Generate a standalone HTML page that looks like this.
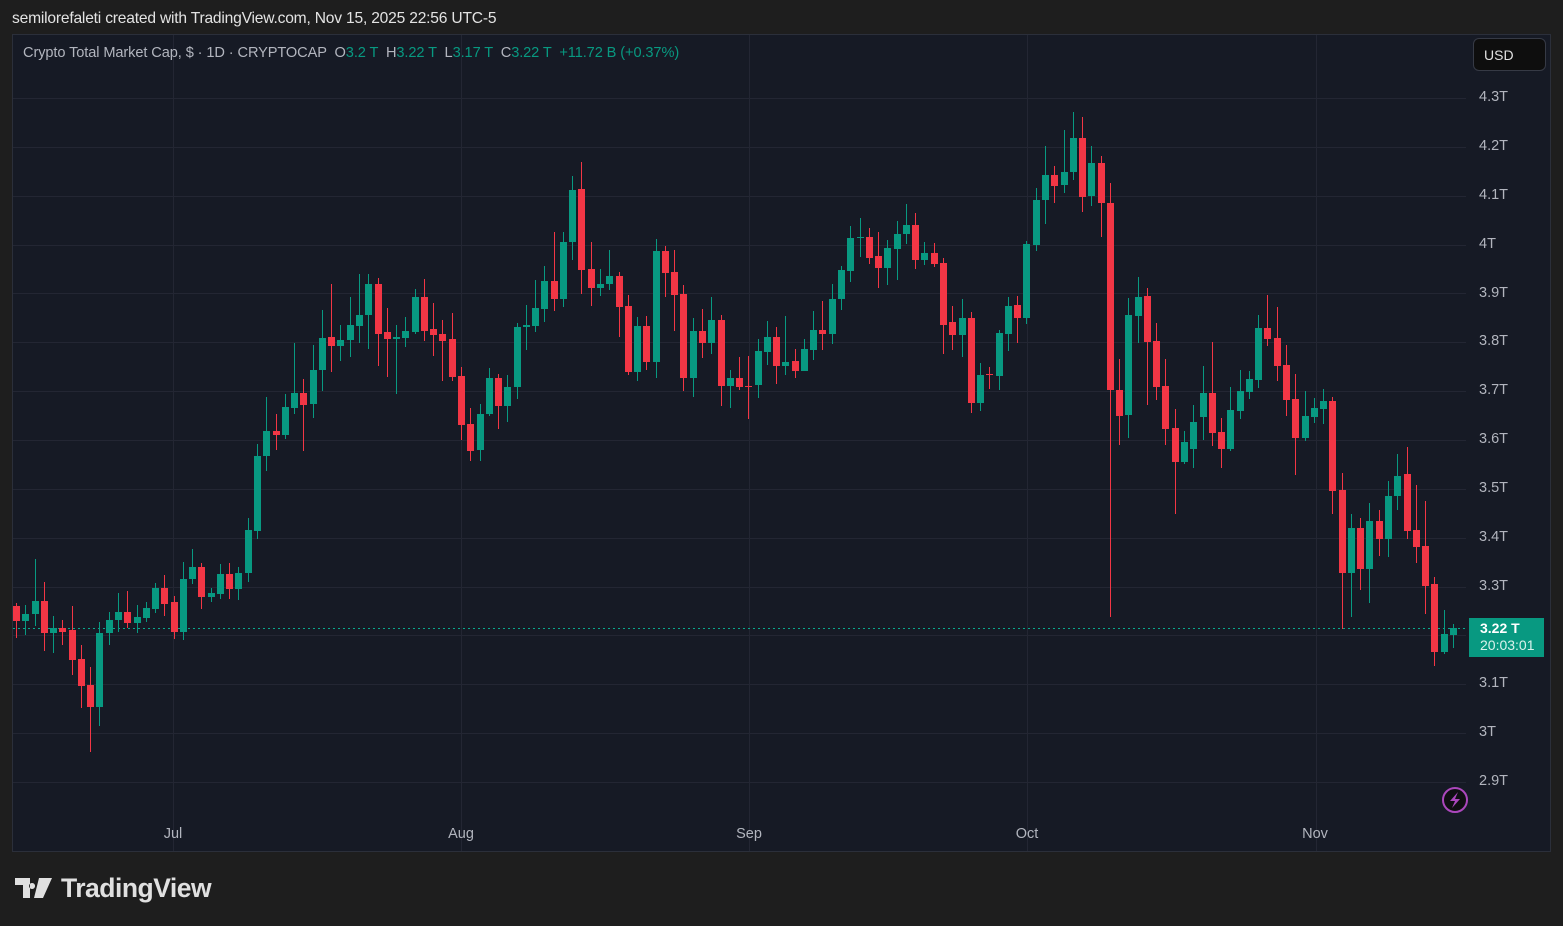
<!DOCTYPE html>
<html><head><meta charset="utf-8"><style>
*{margin:0;padding:0;box-sizing:border-box}
body{width:1563px;height:926px;background:#1e1e1e;font-family:"Liberation Sans",sans-serif;position:relative;overflow:hidden}
.top{position:absolute;left:12px;top:10px;color:#e3e3e3;font-size:15.6px;letter-spacing:-0.2px}
.panel{position:absolute;left:12px;top:34px;width:1539px;height:818px;background:#161a25;border:1px solid #2b2f3a}
.leg{position:absolute;left:23px;top:45px;color:#b2b5be;font-size:14.6px;letter-spacing:-0.1px}
.leg b{font-weight:normal;color:#089981}
.usd{position:absolute;left:1473px;top:38px;width:73px;height:33px;background:#0e0e0e;border:1px solid #363a45;border-radius:6px;color:#e0e0e0;font-size:14px;padding:8px 0 0 10px}
.pl{position:absolute;left:1479px;color:#b2b5be;font-size:14.5px}
.tl{position:absolute;top:826px;color:#b2b5be;font-size:14.5px;transform:translateX(-50%)}
.pbox{position:absolute;left:1469px;top:618px;width:75px;height:39px;background:#089981;color:#fff;font-size:14px;padding:2px 0 0 11px;line-height:17px;font-weight:bold}
.pbox span{font-weight:normal;color:#d9f2ec}
.logo{position:absolute;left:15px;top:873px;color:#e0e0e0;font-size:26.5px;font-weight:bold;letter-spacing:-0.5px}
</style></head><body>
<div class="top">semilorefaleti created with TradingView.com, Nov 15, 2025 22:56 UTC-5</div>
<div class="panel"></div>
<svg id="ch" width="1563" height="926" style="position:absolute;left:0;top:0"></svg>
<div class="leg">Crypto Total Market Cap, $ · 1D · CRYPTOCAP &nbsp;O<b>3.2 T</b> &nbsp;H<b>3.22 T</b> &nbsp;L<b>3.17 T</b> &nbsp;C<b>3.22 T</b> &nbsp;<b>+11.72 B (+0.37%)</b></div>
<div class="usd">USD</div>
<div class="pl" style="top:89px">4.3T</div>
<div class="pl" style="top:138px">4.2T</div>
<div class="pl" style="top:187px">4.1T</div>
<div class="pl" style="top:236px">4T</div>
<div class="pl" style="top:285px">3.9T</div>
<div class="pl" style="top:333px">3.8T</div>
<div class="pl" style="top:382px">3.7T</div>
<div class="pl" style="top:431px">3.6T</div>
<div class="pl" style="top:480px">3.5T</div>
<div class="pl" style="top:529px">3.4T</div>
<div class="pl" style="top:578px">3.3T</div>
<div class="pl" style="top:675px">3.1T</div>
<div class="pl" style="top:724px">3T</div>
<div class="pl" style="top:773px">2.9T</div>
<div class="pbox">3.22 T<br><span>20:03:01</span></div>
<div class="tl" style="left:173px">Jul</div>
<div class="tl" style="left:461px">Aug</div>
<div class="tl" style="left:749px">Sep</div>
<div class="tl" style="left:1027px">Oct</div>
<div class="tl" style="left:1315px">Nov</div>
<svg style="position:absolute;left:15px;top:878px" width="38" height="20" viewBox="0 0 38 20"><path d="M0 0H15V20H8V7H0Z M17 5a3 3 0 1 0 0.1 0Z M24 0H37L28 20H19Z" fill="#e0e0e0"/></svg>
<div class="logo" style="left:61px">TradingView</div>
<script>
var D=[
[606,621,603,638,0],[614,621,605,635,1],[601,614,559,626,1],[601,633,582,651,0],[628,633,616,653,1],[628,632,620,645,0],[630,660,606,675,0],[659,686,645,708,0],[685,707,667,752,0],[633,707,622,726,1],
[620,633,612,645,1],[612,620,593,632,1],[612,623,591,628,0],[617,623,605,633,1],[608,618,602,622,1],[588,609,583,613,1],[588,604,575,616,0],[602,632,596,639,0],[579,632,562,640,1],[567,579,549,584,1],
[567,597,563,609,0],[593,597,588,602,1],[574,594,564,599,1],[574,589,563,599,0],[573,589,567,600,1],[530,573,518,582,1],[456,531,444,539,1],[431,456,397,471,1],[431,435,414,450,0],[407,435,394,439,1],
[393,408,343,414,1],[393,405,379,451,0],[370,404,345,418,1],[338,370,310,391,1],[337,346,284,372,0],[340,346,325,361,1],[325,340,297,357,1],[315,326,274,343,1],[284,315,274,349,1],[284,334,278,366,0],
[332,339,308,377,0],[337,339,325,394,1],[331,338,317,347,1],[297,332,289,334,1],[297,331,279,341,0],[329,335,303,356,0],[334,341,320,381,0],[339,377,313,381,0],[376,425,367,440,0],[424,451,408,461,0],
[414,450,404,461,1],[378,414,368,416,1],[378,406,374,429,0],[387,406,375,422,1],[327,387,323,399,1],[325,327,305,350,1],[308,326,280,332,1],[281,309,266,322,1],[281,299,232,311,0],[242,299,232,307,1],
[190,242,176,260,1],[189,270,162,294,0],[269,288,242,306,0],[284,288,269,296,1],[276,284,250,290,1],[276,307,272,337,0],[306,372,295,375,0],[326,372,317,381,1],[326,362,316,370,0],[251,362,239,378,1],
[251,273,246,297,0],[272,295,250,331,0],[294,378,285,391,0],[331,378,318,397,1],[331,343,309,358,0],[320,343,297,354,1],[320,386,315,406,0],[378,386,370,408,1],[378,387,357,390,0],[386,387,356,419,0],
[351,385,339,398,1],[337,352,321,365,1],[337,366,327,384,0],[362,366,316,375,1],[361,371,349,378,0],[349,371,339,371,1],[330,350,311,360,1],[330,334,301,350,0],[299,334,284,344,1],[270,299,266,310,1],
[238,271,226,282,1],[237,238,218,257,1],[237,258,228,264,0],[256,268,232,288,0],[248,268,240,285,1],[234,249,221,280,1],[225,234,204,244,1],[225,260,213,269,0],[253,260,242,265,1],[253,264,243,267,0],
[263,325,258,354,0],[322,335,306,350,0],[318,335,299,357,1],[318,403,312,413,0],[375,403,363,411,1],[374,375,367,389,0],[333,376,330,390,1],[306,334,297,351,1],[305,318,296,343,0],[244,318,241,324,1],
[200,245,188,251,1],[175,200,146,224,1],[175,186,166,203,0],[172,185,130,193,1],[138,172,112,180,1],[138,197,117,212,0],[163,196,146,206,1],[163,203,156,237,0],[203,390,183,617,0],[390,416,359,445,0],
[315,415,298,438,1],[297,316,277,343,1],[296,342,288,405,0],[341,387,323,400,0],[386,429,359,445,0],[428,462,409,514,0],[442,462,431,464,1],[422,449,405,468,1],[393,417,366,440,1],[393,433,342,446,0],
[432,449,418,468,0],[410,449,387,451,1],[391,411,370,419,1],[379,392,371,399,1],[328,380,315,388,1],[328,339,295,346,0],[338,366,307,381,0],[365,400,345,416,0],[399,438,374,475,0],[416,438,391,441,1],
[408,417,398,423,1],[401,409,389,424,1],[401,491,397,514,0],[490,573,473,629,0],[528,573,514,617,1],[528,569,518,590,0],[521,569,503,603,1],[521,539,510,556,0],[496,539,481,557,1],[476,496,454,510,1],
[474,531,447,539,0],[530,547,485,563,0],[546,586,501,614,0],[584,652,577,666,0],[634,652,610,654,1],[628,635,624,648,1]];
var s='';
for(var y=98;y<=790;y+=48.86){var yy=Math.round(y)+.5;s+='<line x1="13" x2="1466" y1="'+yy+'" y2="'+yy+'" stroke="#232633" stroke-width="1"/>';}
[173,461,749,1027,1316].forEach(function(x){s+='<line x1="'+(x+.5)+'" x2="'+(x+.5)+'" y1="35" y2="851" stroke="#232633"/>';});
s+='<line x1="13" x2="1466" y1="628.5" y2="628.5" stroke="#0aa88d" stroke-dasharray="2,3"/>';
for(var i=0;i<D.length;i++){var d=D[i],x=Math.round(16+i*9.27),c=d[4]?'#089981':'#f23645';
s+='<rect x="'+x+'" y="'+d[2]+'" width="1" height="'+(d[3]-d[2])+'" fill="'+c+'"/>';
s+='<rect x="'+(x-3)+'" y="'+d[0]+'" width="7" height="'+Math.max(1,d[1]-d[0])+'" fill="'+c+'"/>';}
s+='<circle cx="1455" cy="800" r="12" fill="#0f0f12" stroke="#ab47bc" stroke-width="2"/><path d="M1458 792L1450 801H1455L1452 808L1460 799H1455Z" fill="#ab47bc"/>';
document.getElementById('ch').innerHTML=s;
</script>
</body></html>
